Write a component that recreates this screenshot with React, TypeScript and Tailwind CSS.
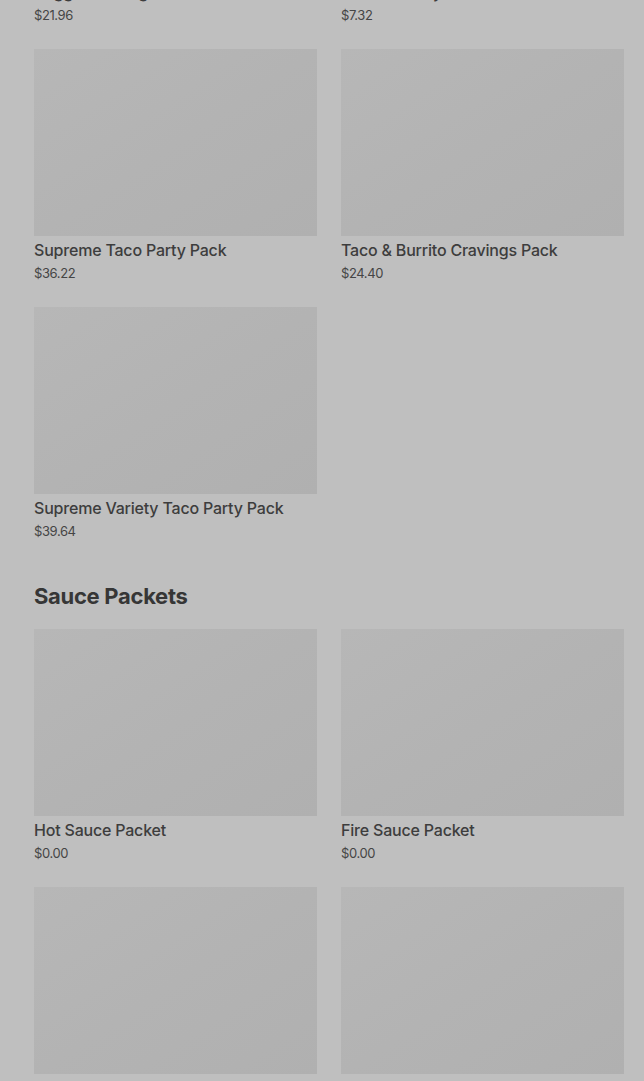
const partyPacks = [
  { name: 'Veggie Cravings Pack', price: '$21.96' },
  { name: 'Nachos Party Pack', price: '$7.32' },
  { name: 'Supreme Taco Party Pack', price: '$36.22' },
  { name: 'Taco & Burrito Cravings Pack', price: '$24.40' },
  { name: 'Supreme Variety Taco Party Pack', price: '$39.64' },
]

const sauces = [
  { name: 'Hot Sauce Packet', price: '$0.00' },
  { name: 'Fire Sauce Packet', price: '$0.00' },
  { name: 'Diablo Sauce Packet', price: '$0.00' },
  { name: 'Mild Sauce Packet', price: '$0.00' },
]

function ItemCard({ name, price }: { name: string; price: string }) {
  return (
    <div className="flex flex-col">
      <div className="h-[187px] w-full bg-gradient-to-br from-[#b7b7b7] via-[#b3b3b3] to-[#b0b0b0]" />
      <div className="mt-[4px] text-[16px] leading-[20px] font-medium text-[#3d3d3d] tracking-[-0.2px]">
        {name}
      </div>
      <div className="mt-[4px] text-[13px] leading-[18px] text-[#454545] tracking-[-0.4px]">
        {price}
      </div>
    </div>
  )
}

export default function App() {
  return (
    <div
      className="min-h-[1081px] w-[644px] overflow-hidden bg-[#bfbfbf]"
      style={{ fontFamily: 'Inter, Roboto, "Noto Sans", sans-serif' }}
    >
      <div className="mt-[-209px] pl-[34px] pr-[20px]">
        <div className="grid grid-cols-2 gap-x-[24px] gap-y-[25px]">
          {partyPacks.map(p => (
            <ItemCard key={p.name} {...p} />
          ))}
        </div>

        <h2 className="mt-[42px] mb-[19px] text-[22px] leading-[28px] font-bold text-[#363636] tracking-[-0.3px]">
          Sauce Packets
        </h2>

        <div className="grid grid-cols-2 gap-x-[24px] gap-y-[25px]">
          {sauces.map(s => (
            <ItemCard key={s.name} {...s} />
          ))}
        </div>
      </div>
    </div>
  )
}
